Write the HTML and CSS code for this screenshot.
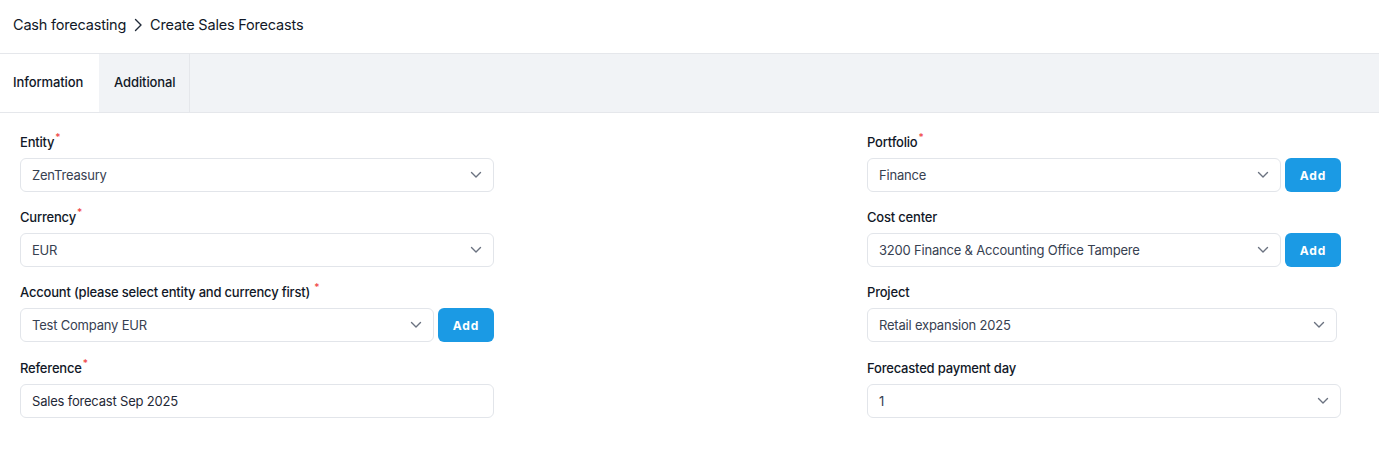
FILE: index.html
```html
<!DOCTYPE html>
<html>
<head>
<meta charset="utf-8">
<link rel="stylesheet" href="styles.css">
</head>
<body>
<div class="crumbs">
  <span>Cash forecasting</span>
  <svg class="crumb-sep" width="10" height="14" viewBox="0 0 10 14"><path d="M2.5 1.5 L8 7 L2.5 12.5" fill="none" stroke="#1f2937" stroke-width="1.4" stroke-linecap="round" stroke-linejoin="round"/></svg>
  <span>Create Sales Forecasts</span>
</div>
<div class="tabs">
  <div class="tab active">Information</div>
  <div class="tab">Additional</div>
</div>
<div class="form">
  <div class="col">
    <div class="field">
      <div class="label">Entity<span class="req">*</span></div>
      <div class="row"><div class="select"><span>ZenTreasury</span><svg class="chev" width="12" height="8" viewBox="0 0 12 8"><path d="M1.5 1.5 L6 6 L10.5 1.5" fill="none" stroke="#6b7280" stroke-width="1.4" stroke-linecap="round" stroke-linejoin="round"/></svg></div></div>
    </div>
    <div class="field">
      <div class="label">Currency<span class="req">*</span></div>
      <div class="row"><div class="select"><span>EUR</span><svg class="chev" width="12" height="8" viewBox="0 0 12 8"><path d="M1.5 1.5 L6 6 L10.5 1.5" fill="none" stroke="#6b7280" stroke-width="1.4" stroke-linecap="round" stroke-linejoin="round"/></svg></div></div>
    </div>
    <div class="field">
      <div class="label">Account (please select entity and currency first) <span class="req">*</span></div>
      <div class="row"><div class="select"><span>Test Company EUR</span><svg class="chev" width="12" height="8" viewBox="0 0 12 8"><path d="M1.5 1.5 L6 6 L10.5 1.5" fill="none" stroke="#6b7280" stroke-width="1.4" stroke-linecap="round" stroke-linejoin="round"/></svg></div><button class="add">Add</button></div>
    </div>
    <div class="field">
      <div class="label">Reference<span class="req">*</span></div>
      <div class="row"><div class="input">Sales forecast Sep 2025</div></div>
    </div>
  </div>
  <div class="col">
    <div class="field">
      <div class="label">Portfolio<span class="req">*</span></div>
      <div class="row"><div class="select"><span>Finance</span><svg class="chev" width="12" height="8" viewBox="0 0 12 8"><path d="M1.5 1.5 L6 6 L10.5 1.5" fill="none" stroke="#6b7280" stroke-width="1.4" stroke-linecap="round" stroke-linejoin="round"/></svg></div><button class="add">Add</button></div>
    </div>
    <div class="field">
      <div class="label">Cost center</div>
      <div class="row"><div class="select"><span>3200 Finance &amp; Accounting Office Tampere</span><svg class="chev" width="12" height="8" viewBox="0 0 12 8"><path d="M1.5 1.5 L6 6 L10.5 1.5" fill="none" stroke="#6b7280" stroke-width="1.4" stroke-linecap="round" stroke-linejoin="round"/></svg></div><button class="add">Add</button></div>
    </div>
    <div class="field">
      <div class="label">Project</div>
      <div class="row narrow"><div class="select"><span>Retail expansion 2025</span><svg class="chev" width="12" height="8" viewBox="0 0 12 8"><path d="M1.5 1.5 L6 6 L10.5 1.5" fill="none" stroke="#6b7280" stroke-width="1.4" stroke-linecap="round" stroke-linejoin="round"/></svg></div></div>
    </div>
    <div class="field">
      <div class="label">Forecasted payment day</div>
      <div class="row"><div class="select"><span>1</span><svg class="chev" width="12" height="8" viewBox="0 0 12 8"><path d="M1.5 1.5 L6 6 L10.5 1.5" fill="none" stroke="#6b7280" stroke-width="1.4" stroke-linecap="round" stroke-linejoin="round"/></svg></div></div>
    </div>
  </div>
</div>
</body>
</html>
```
FILE: styles.css
```css
* { box-sizing: border-box; }
body {
  margin: 0;
  font-family: Inter, "Noto Sans", sans-serif;
  color: #111827;
  background: #fff;
}
.crumbs {
  height: 53px;
  display: flex;
  align-items: center;
  gap: 7px;
  padding: 0 13px 4px;
  font-size: 14.5px;
  color: #111827;
  letter-spacing: -0.2px;
}
.crumb-sep { flex: none; }
.tabs {
  display: flex;
  height: 60px;
  background: #f1f3f6;
  border-top: 1px solid #e5e7eb;
  border-bottom: 1px solid #e5e7eb;
}
.tab {
  display: flex;
  align-items: center;
  padding: 0 14px 0 13px;
  font-size: 13px;
  font-weight: 500;
  letter-spacing: -0.1px;
  color: #111827;
  border-right: 1px solid #e5e7eb;
  padding-bottom: 2px;
}
.tab.active {
  background: #fff;
  width: 99px;
  border-right: none;
}
.tab + .tab { padding-left: 15px; width: 91px; }
.form {
  display: grid;
  grid-template-columns: 474px 474px;
  column-gap: 373px;
  padding: 18px 20px 0;
}
.field {
  display: flex;
  flex-direction: column;
  margin-bottom: 14px;
}
.field:nth-child(3) { margin-bottom: 15px; }
.label {
  height: 20px;
  line-height: 22px;
  font-size: 13px;
  font-weight: 500;
  letter-spacing: -0.2px;
  color: #111827;
  margin-bottom: 7px;
}
.req {
  color: #ef4444;
  font-size: 10px;
  vertical-align: top;
  line-height: 12px;
  margin-left: 1px;
}
.row {
  display: flex;
  gap: 4px;
  height: 34px;
}
.row.narrow { width: 470px; }
.select, .input {
  flex: 1;
  display: flex;
  align-items: center;
  justify-content: space-between;
  border: 1px solid #e2e5ea;
  border-radius: 6px;
  padding: 0 11px 0 11px;
  font-size: 13px;
  letter-spacing: -0.2px;
  color: #374151;
  background: #fff;
}
.input { color: #1f2937; }
.chev { flex: none; }
.add {
  flex: none;
  width: 56px;
  height: 34px;
  border: none;
  border-radius: 6px;
  background: #1b9ae4;
  color: #fff;
  font-family: Inter, "Noto Sans", sans-serif;
  font-size: 12px;
  font-weight: 700;
  letter-spacing: 0.9px;
  padding: 0;
}
```
